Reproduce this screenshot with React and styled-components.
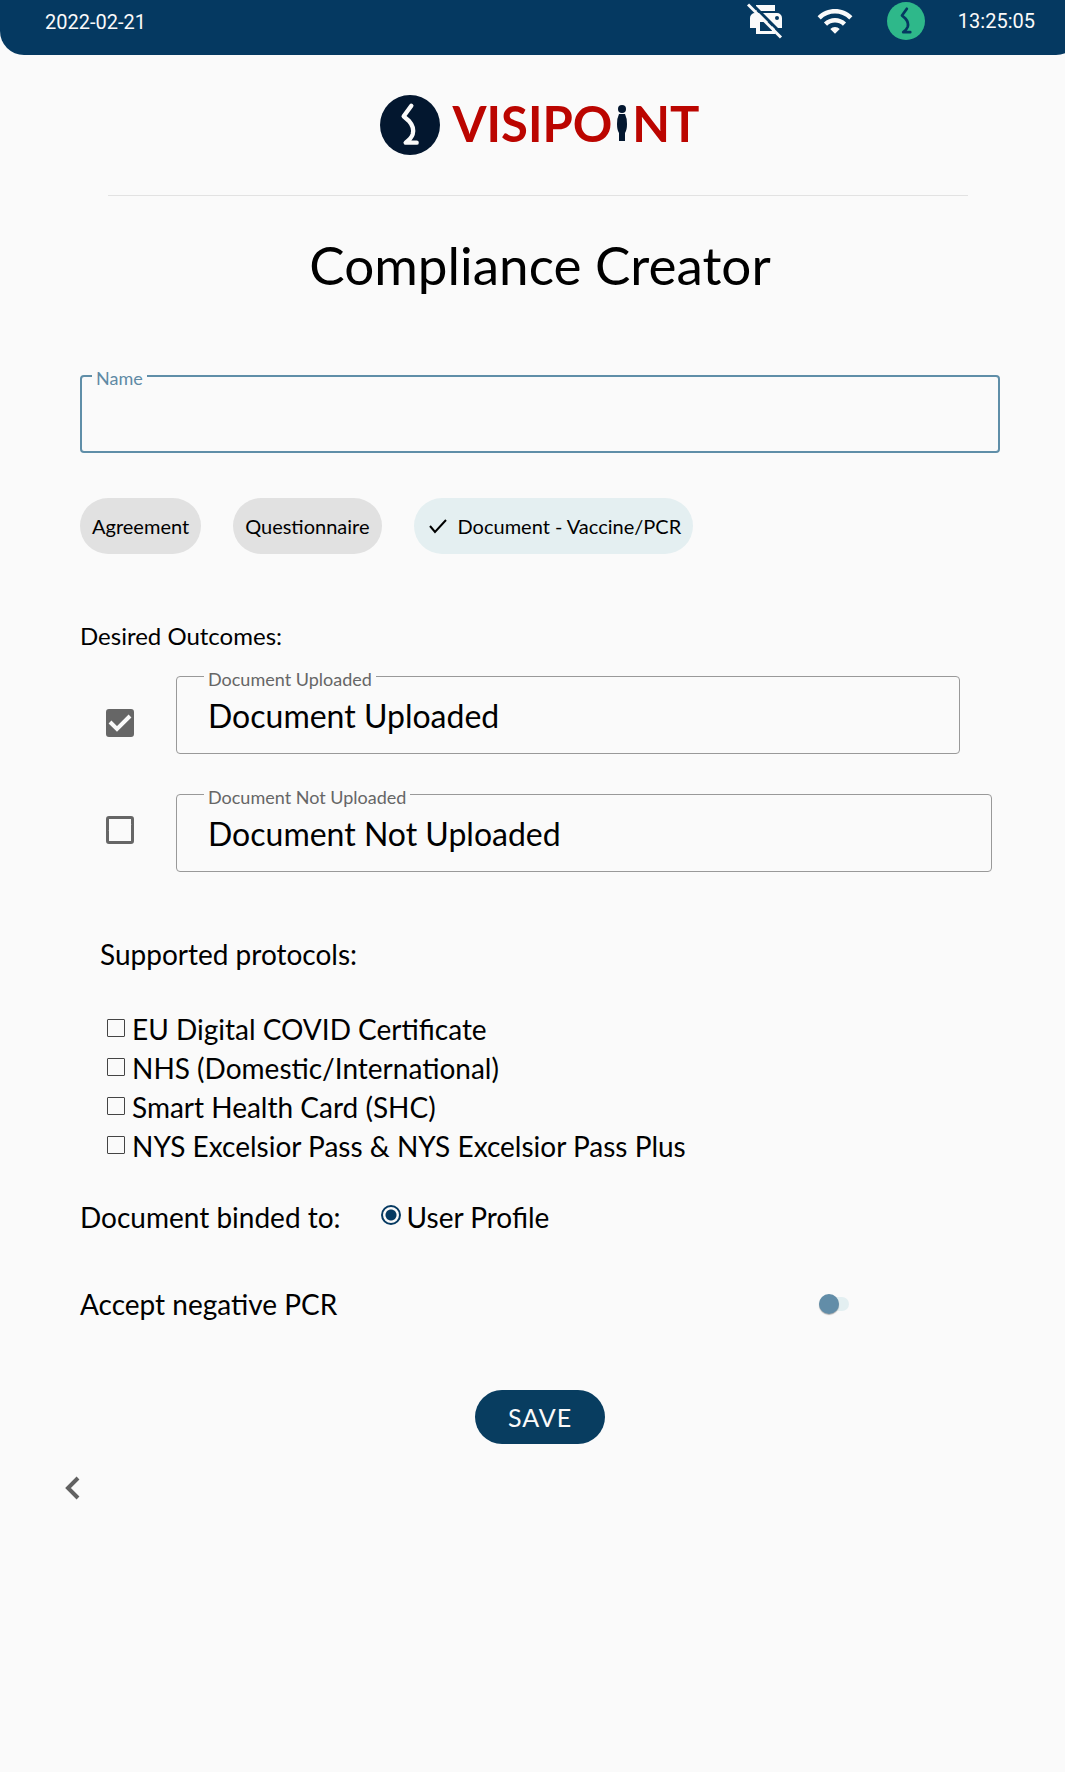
import { useState } from "react";
import styled, { createGlobalStyle } from "styled-components";
import { MdWifi } from "react-icons/md";

const PROTOCOLS = [
  "EU Digital COVID Certificate",
  "NHS (Domestic/International)",
  "Smart Health Card (SHC)",
  "NYS Excelsior Pass & NYS Excelsior Pass Plus",
];

const TYPES = ["Agreement", "Questionnaire", "Document - Vaccine/PCR"];

function Squiggle({ size, disc, line }) {
  return (
    <svg width={size} height={size} viewBox="0 0 180 180" aria-hidden="true">
      <circle cx="90" cy="90" r="90" fill={disc} />
      <path
        d="M94 32 L71 64 L87 78 Q104 97 98 118 Q94 130 77 143 H110"
        fill="none"
        stroke={line}
        strokeWidth="13"
        strokeLinecap="round"
        strokeLinejoin="round"
      />
    </svg>
  );
}

function PrinterOff() {
  return (
    <svg width="36" height="36" viewBox="0 0 36 36" aria-hidden="true">
      <path d="M9 2h19v6H9z" fill="#fafafa" />
      <path d="M8 10h22a5 5 0 0 1 5 5v10h-7v6H9v-6H3V15a5 5 0 0 1 5-5z" fill="#fafafa" />
      <path d="M13 19h12v9H13z" fill="#053961" />
      <circle cx="30" cy="15" r="2" fill="#053961" />
      <path d="M3 -1l33 33" stroke="#053961" strokeWidth="3" />
      <path d="M1 1.500l33 33" stroke="#fafafa" strokeWidth="3" />
    </svg>
  );
}

function App() {
  const [name, setName] = useState("");
  const [type, setType] = useState(TYPES[2]);
  const [uploaded, setUploaded] = useState(true);
  const [notUploaded, setNotUploaded] = useState(false);
  const [acceptPcr, setAcceptPcr] = useState(false);

  return (
    <Page>
      <GlobalStyle />
      <StatusBar>
        <span>2022-02-21</span>
        <StatusIcons>
          <PrinterOff />
          <MdWifi size={38} color="#fafafa" />
          <Squiggle size={38} disc="#2eb88a" line="#053961" />
          <span>13:25:05</span>
        </StatusIcons>
      </StatusBar>

      <Content>
        <Logo>
          <Squiggle size={60} disc="#03172f" line="#fafafa" />
          <Wordmark>
            VISIPO
            <svg width="12" height="36" viewBox="0 0 12 36" role="img" aria-label="i">
              <circle cx="6" cy="4" r="4" fill="#03172f" />
              <path d="M3 9h6q2 4 2 10t-2 9v8H3v-8q-2-3-2-9t2-10z" fill="#03172f" />
            </svg>
            NT
          </Wordmark>
        </Logo>
        <Divider />
        <Title>Compliance Creator</Title>

        <Field $active>
          <label htmlFor="name">Name</label>
          <input id="name" value={name} onChange={(e) => setName(e.target.value)} />
        </Field>

        <Chips>
          {TYPES.map((t) => (
            <Chip
              key={t}
              type="button"
              $selected={t === type}
              aria-pressed={t === type}
              onClick={() => setType(t)}
            >
              {t === type && (
                <svg width="24" height="24" viewBox="0 0 24 24" aria-hidden="true">
                  <path d="M4 12l5 6L20 6" fill="none" stroke="#000" strokeWidth="2" />
                </svg>
              )}
              {t}
            </Chip>
          ))}
        </Chips>

        <SectionTitle>Desired Outcomes:</SectionTitle>
        <Outcomes>
          <OutcomeChecks>
            <CheckWrap>
              <BigCheck
                type="checkbox"
                aria-label="Document Uploaded enabled"
                checked={uploaded}
                onChange={(e) => setUploaded(e.target.checked)}
              />
              <Tick />
            </CheckWrap>
            <CheckWrap>
              <BigCheck
                type="checkbox"
                aria-label="Document Not Uploaded enabled"
                checked={notUploaded}
                onChange={(e) => setNotUploaded(e.target.checked)}
              />
              <Tick />
            </CheckWrap>
          </OutcomeChecks>
          <OutcomeFields>
            <Field $indent $inset>
              <label htmlFor="uploaded">Document Uploaded</label>
              <input id="uploaded" defaultValue="Document Uploaded" />
            </Field>
            <Field $indent>
              <label htmlFor="not-uploaded">Document Not Uploaded</label>
              <input id="not-uploaded" defaultValue="Document Not Uploaded" />
            </Field>
          </OutcomeFields>
        </Outcomes>

        <Protocols>
          <legend>Supported protocols:</legend>
          {PROTOCOLS.map((p) => (
            <ProtocolRow key={p}>
              <SmallCheck type="checkbox" />
              {p}
            </ProtocolRow>
          ))}
        </Protocols>

        <BindRow>
          <span>Document binded to:</span>
          <label>
            <Radio type="radio" name="bind" defaultChecked />
            User Profile
          </label>
        </BindRow>

        <SwitchRow>
          <label htmlFor="pcr">Accept negative PCR</label>
          <Switch
            id="pcr"
            type="checkbox"
            role="switch"
            checked={acceptPcr}
            onChange={(e) => setAcceptPcr(e.target.checked)}
          />
        </SwitchRow>

        <SaveButton type="button">SAVE</SaveButton>
      </Content>

      <BackButton type="button" aria-label="Back">
        <svg width="16" height="24" viewBox="0 0 16 24" aria-hidden="true">
          <path d="M13 2L3 12l10 10" fill="none" stroke="#616161" strokeWidth="4" />
        </svg>
      </BackButton>
    </Page>
  );
}

function Tick() {
  return (
    <svg width="28" height="28" viewBox="0 0 28 28" aria-hidden="true">
      <path d="M4 13l7 7L24 7" fill="none" stroke="#fafafa" strokeWidth="4" />
    </svg>
  );
}

const GlobalStyle = createGlobalStyle`
  * {
    box-sizing: border-box;
  }
  body {
    margin: 0;
    background: #fafafa;
    color: #000;
    font-family: Lato, Carlito, sans-serif;
  }
  input, button {
    font-family: inherit;
    color: inherit;
  }
`;

const Page = styled.div`
  min-height: 100vh;
  overflow-x: hidden;
  background: #fafafa;
`;

/* The bar runs a little past the right edge of the screen */
const StatusBar = styled.header`
  display: flex;
  justify-content: space-between;
  height: 55px;
  margin-right: -15px;
  padding: 2px 45px 15px 45px;
  border-radius: 0 0 24px 24px;
  background: #053961;
  color: #fafafa;
  font: 20px/40px Roboto, sans-serif;
`;

const StatusIcons = styled.div`
  display: flex;
  align-items: center;
  gap: 33px;
`;

const Content = styled.main`
  display: flex;
  flex-direction: column;
  padding: 40px 65px 0 80px;
`;

const Logo = styled.div`
  display: flex;
  align-items: center;
  align-self: center;
  gap: 12px;
`;

const Wordmark = styled.div`
  display: flex;
  align-items: center;
  gap: 4px;
  padding-bottom: 4px;
  color: #bb0500;
  font-size: 49px;
  font-weight: 700;
  line-height: 56px;
`;

const Divider = styled.hr`
  align-self: stretch;
  margin: 40px 32px 0 28px;
  border: none;
  border-top: 1px solid #e2e2e2;
`;

const Title = styled.h1`
  margin: 37px 0 78px;
  font-size: 53px;
  font-weight: 400;
  line-height: 64px;
  text-align: center;
`;

const Field = styled.div`
  position: relative;
  margin-right: ${({ $inset }) => ($inset ? "32px" : "0")};

  label {
    position: absolute;
    top: -7px;
    left: ${({ $indent }) => ($indent ? "28px" : "12px")};
    padding: 0 4px;
    background: #fafafa;
    color: ${({ $active }) => ($active ? "#5f8aa5" : "#666")};
    font-size: 18px;
    line-height: 20px;
  }

  input {
    display: block;
    width: 100%;
    height: 78px;
    padding: 0 31px;
    border: ${({ $active }) => ($active ? "2px solid #5f8ea8" : "1px solid #999")};
    border-radius: 4px;
    outline: none;
    background: transparent;
    font-size: 32px;
  }
`;

const Chips = styled.div`
  display: flex;
  flex-wrap: wrap;
  gap: 32px;
  margin-top: 45px;
`;

const Chip = styled.button`
  display: flex;
  align-items: center;
  gap: 8px;
  height: 56px;
  padding: 0 12px;
  border: none;
  border-radius: 28px;
  background: ${({ $selected }) => ($selected ? "#e4eff1" : "#e1e1e1")};
  font-size: 20px;
`;

const SectionTitle = styled.h2`
  margin: 66px 0 24px;
  font-size: 24px;
  font-weight: 400;
  line-height: 32px;
`;

const Outcomes = styled.div`
  display: flex;
`;

const OutcomeChecks = styled.div`
  display: flex;
  flex-direction: column;
  gap: 79px;
  width: 96px;
  padding: 33px 0 0 26px;
`;

const OutcomeFields = styled.div`
  display: flex;
  flex: 1;
  flex-direction: column;
  gap: 40px;
  padding-right: 8px;
`;

const CheckWrap = styled.span`
  position: relative;
  width: 28px;
  height: 28px;

  svg {
    position: absolute;
    inset: 0;
    pointer-events: none;
  }
`;

const BigCheck = styled.input`
  appearance: none;
  display: block;
  width: 28px;
  height: 28px;
  margin: 0;
  border: 3px solid #666;
  border-radius: 3px;

  &:checked {
    background: #666;
  }
`;

const Protocols = styled.fieldset`
  margin: 62px 0 0;
  padding: 0 20px;
  border: none;
  font-size: 28px;

  legend {
    margin-bottom: 36px;
    padding: 0;
    line-height: 40px;
  }
`;

const ProtocolRow = styled.label`
  display: flex;
  align-items: center;
  gap: 7px;
  padding-left: 7px;
  line-height: 39px;
`;

const SmallCheck = styled.input`
  appearance: none;
  width: 18px;
  height: 18px;
  margin: 0 0 4px;
  border: 1px solid #444;
  border-radius: 1px;

  &:checked {
    background: #666;
  }
`;

const BindRow = styled.div`
  display: flex;
  align-items: center;
  gap: 40px;
  margin-top: 31px;
  font-size: 28px;
  line-height: 40px;

  label {
    display: flex;
    align-items: center;
    gap: 6px;
  }
`;

const Radio = styled.input`
  appearance: none;
  width: 20px;
  height: 20px;
  margin: 0 0 4px;
  border: 2px solid #053961;
  border-radius: 50%;

  &:checked {
    background: radial-gradient(circle, #053961 5px, transparent 6px);
  }
`;

const SwitchRow = styled.div`
  display: flex;
  align-items: center;
  justify-content: space-between;
  margin-top: 47px;
  padding-right: 151px;
  font-size: 28px;
  line-height: 40px;
`;

const Switch = styled.input`
  appearance: none;
  display: flex;
  align-items: center;
  width: 30px;
  height: 14px;
  margin: 0;
  border-radius: 7px;
  background: #e3eff1;

  &::before {
    content: "";
    width: 20px;
    height: 20px;
    flex: none;
    border-radius: 50%;
    background: #628da8;
    box-shadow: 0 1px 1px rgba(0, 0, 0, 0.3);
  }

  &:checked {
    justify-content: flex-end;
  }
`;

const SaveButton = styled.button`
  align-self: center;
  height: 54px;
  margin-top: 66px;
  padding: 0 33px;
  border: none;
  border-radius: 27px;
  background: #083d60;
  color: #fafafa;
  font-size: 25px;
  letter-spacing: 1px;
`;

const BackButton = styled.button`
  display: block;
  margin: 32px 0 0 65px;
  padding: 0;
  border: none;
  background: none;
  line-height: 0;
`;

export default App;
